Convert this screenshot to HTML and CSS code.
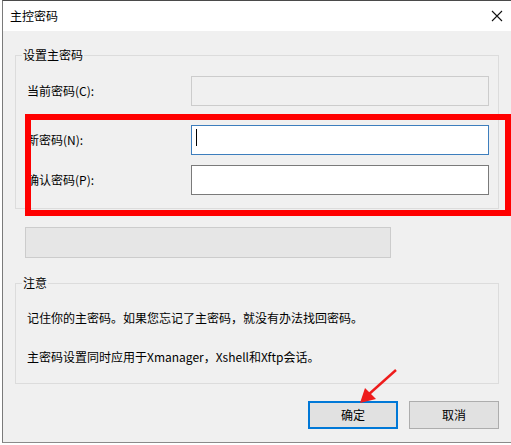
FILE: index.html
```html
<!DOCTYPE html>
<html lang="zh-CN">
<head>
<meta charset="utf-8">
<title>主控密码</title>
<link rel="stylesheet" href="styles.css">
</head>
<body>
<div class="window">
  <div class="titlebar">
    <span class="title">主控密码</span>
    <span class="close">
      <svg width="12" height="12" viewBox="0 0 12 12"><path d="M1 1 L11 11 M11 1 L1 11" stroke="#111" stroke-width="1.1" fill="none"/></svg>
    </span>
  </div>
  <div class="content">
    <fieldset class="group group-pass">
      <legend>设置主密码</legend>
      <div class="row row-current">
        <label class="lbl">当前密码(C):</label>
        <div class="field disabled"></div>
      </div>
      <div class="row row-new">
        <label class="lbl">新密码(N):</label>
        <div class="field focused"><span class="caret"></span></div>
      </div>
      <div class="row row-confirm">
        <label class="lbl">确认密码(P):</label>
        <div class="field"></div>
      </div>
    </fieldset>
    <div class="meter"></div>
    <fieldset class="group group-note">
      <legend>注意</legend>
      <p class="note note-1">记住你的主密码。如果您忘记了主密码，就没有办法找回密码。</p>
      <p class="note note-2">主密码设置同时应用于Xmanager，Xshell和Xftp会话。</p>
    </fieldset>
    <div class="buttons">
      <button class="btn primary">确定</button>
      <button class="btn">取消</button>
    </div>
  </div>
  <div class="highlight"></div>
  <svg class="arrow" width="60" height="50" viewBox="0 0 60 50">
    <line x1="54" y1="8" x2="26" y2="33" stroke="#ee1c1c" stroke-width="2.4"/>
    <polygon points="18,41 23,26 34,37" fill="#ee1c1c"/>
  </svg>
</div>
</body>
</html>
```

FILE: styles.css
```css
html, body {
  margin: 0;
  padding: 0;
  background: #ffffff;
}
body {
  width: 511px;
  height: 445px;
  overflow: hidden;
  padding-left: 2px;
  box-sizing: border-box;
  font-family: "Noto Sans CJK SC", "Microsoft YaHei", "Liberation Sans", sans-serif;
  font-size: 12px;
  line-height: 16px;
  color: #000;
}
.window {
  position: relative;
  width: 509px;
  height: 443px;
  box-sizing: border-box;
  border-top: 1px solid #4a4a4a;
  border-left: 1px solid #7a7a7a;
  border-bottom: 1px solid #8a8a8a;
  background: #f0f0f0;
}
.titlebar {
  height: 30px;
  background: #ffffff;
  display: flex;
  align-items: center;
  justify-content: space-between;
  padding: 0 8px 0 7px;
}
.title {
  font-size: 12px;
  line-height: 16px;
}
.close {
  display: flex;
  width: 12px;
  height: 12px;
}
.content {
  padding: 0 12px;
}
.group {
  margin: 0;
  border: 1px solid #dcdcdc;
  padding: 0 8px 0 6px;
  width: 484px;
  box-sizing: border-box;
  min-width: 0;
}
.group legend {
  padding: 0 1px;
  line-height: 16px;
  color: #000;
}
.group-pass {
  margin-top: 16px;
  padding-bottom: 13px;
}
.row {
  display: flex;
  align-items: center;
}
.row-current { margin-top: 13px; }
.row-new { margin-top: 19px; }
.row-confirm { margin-top: 10px; }
.lbl {
  width: 169px;
  padding-left: 5px;
  box-sizing: border-box;
}
.field {
  width: 298px;
  height: 30px;
  box-sizing: border-box;
  background: #ffffff;
  border: 1px solid #7a7a7a;
  position: relative;
}
.field.disabled {
  background: #f0f0f0;
  border-color: #cccccc;
}
.field.focused {
  border-color: #3d7ebd;
}
.caret {
  display: block;
  width: 1px;
  height: 17px;
  background: #000;
  margin: 3px 0 0 4px;
}
.meter {
  margin: 18px 0 0 10px;
  width: 366px;
  height: 31px;
  box-sizing: border-box;
  background: #e6e6e6;
  border: 1px solid #cccccc;
}
.group-note {
  margin-top: 17px;
  padding-top: 19px;
  padding-bottom: 18px;
}
.note {
  margin: 0;
  padding-left: 5px;
  line-height: 16px;
}
.note-2 {
  margin-top: 23px;
}
.buttons {
  display: flex;
  justify-content: flex-end;
  gap: 11px;
  width: 484px;
  margin-top: 17px;
}
.btn {
  width: 90px;
  height: 28px;
  box-sizing: border-box;
  font-family: inherit;
  font-size: 12px;
  line-height: 16px;
  color: #000;
  background: #e1e1e1;
  border: 1px solid #adadad;
  padding: 0;
}
.btn.primary {
  border: 2px solid #0078d7;
}
.highlight {
  position: absolute;
  left: 22px;
  top: 113px;
  width: 486px;
  height: 102px;
  box-sizing: border-box;
  border: 6px solid #ff0000;
}
.arrow {
  position: absolute;
  left: 339px;
  top: 361px;
}
```
